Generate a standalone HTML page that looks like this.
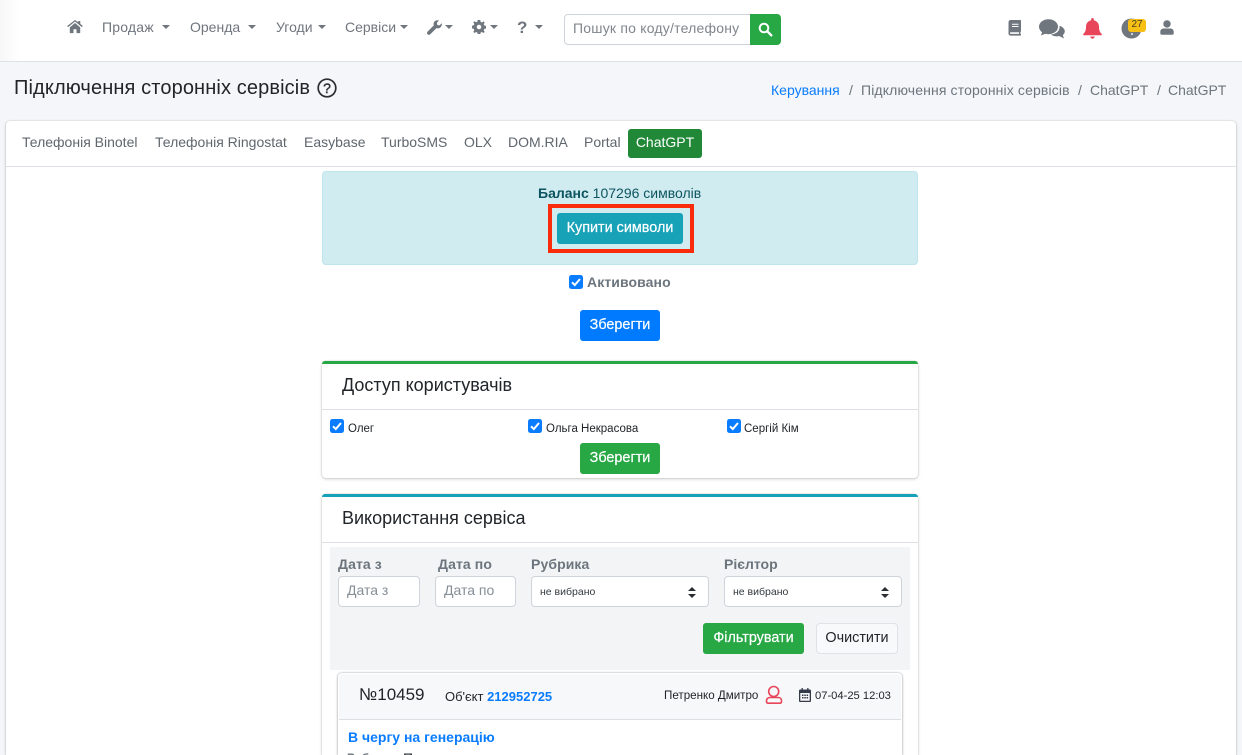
<!DOCTYPE html>
<html lang="uk"><head><meta charset="utf-8"><title>ChatGPT</title>
<style>
*{box-sizing:border-box}
html,body{margin:0;padding:0;width:1242px;height:755px;overflow:hidden;background:#f4f6f9;font-family:"Liberation Sans",Arial,sans-serif;font-size:14px;color:#212529}
#w{position:relative;width:1242px;height:755px;overflow:hidden;background:#f4f6f9}
.a{position:absolute}
.t{position:absolute;white-space:nowrap;line-height:20px}
.nav{color:#6f767d;font-size:14px}
.caret{position:absolute;width:0;height:0;border-left:4px solid transparent;border-right:4px solid transparent;border-top:4px solid #6f767d}
.btn{position:absolute;border-radius:3px;color:#fff;text-align:center;font-size:14.4px;font-weight:400;-webkit-text-stroke:.2px #fff}
.card{position:absolute;background:#fff;border-radius:4px;box-shadow:0 0 1px rgba(0,0,0,.25),0 1px 3px rgba(0,0,0,.2)}
.cb{position:absolute;width:13px;height:13px;background:#0a7cff;border-radius:2.5px}
.cb svg{position:absolute;left:0;top:0}
.lbl{color:#6c757d;font-weight:700}
.inp{position:absolute;background:#fff;border:1px solid #ced4da;border-radius:4px}
svg{display:block}
</style></head><body><div id="w">

<!-- top nav -->
<div class="a" style="left:0;top:0;width:1242px;height:62px;background:#fff;border-bottom:1px solid #dee2e6"></div>
<div class="a" style="left:0;top:0;width:20px;height:61px;background:linear-gradient(90deg,#f7f7f7,#fff)"></div>

<svg class="a" style="left:67px;top:20px" width="16" height="14" viewBox="0 0 16 14"><path fill="#6f767d" d="M8 3 2.8 7.4V12.6c0 .3.2.5.5.5H6.500V9.300h3V13.100h3.200c.3 0 .5-.2.5-.5V7.400zM15.800 6 13.300 3.900V1h-2v1.200L8 0 .2 6l.9 1.100L8 1.500l6.900 5.600z"/></svg>
<div class="t nav" style="left:102px;top:17px;letter-spacing:.2px">Продаж</div><div class="caret" style="left:162px;top:25px"></div>
<div class="t nav" style="left:190px;top:17px">Оренда</div><div class="caret" style="left:248px;top:25px"></div>
<div class="t nav" style="left:276px;top:17px">Угоди</div><div class="caret" style="left:318px;top:25px"></div>
<div class="t nav" style="left:345px;top:17px">Сервіси</div><div class="caret" style="left:400px;top:25px"></div>
<svg class="a" style="left:427px;top:20px" width="15" height="15" viewBox="0 0 15 15"><path fill="#6f767d" d="M14.700 3.200 12.500 5.400 10.300 5 9.900 2.700 12 .5C10.500-.1 8.800.2 7.700 1.300 6.600 2.400 6.300 4 6.800 5.400L.6 11.600c-.8.800-.8 1.900 0 2.700.8.800 1.900.8 2.700 0L9.500 8.100c1.400.5 3 .2 4.100-.9 1.100-1.100 1.500-2.700 1.100-4z"/></svg>
<div class="caret" style="left:445px;top:25px"></div>
<svg class="a" style="left:472px;top:20px" width="14" height="14" viewBox="0 0 14 14"><path fill="#6f767d" fill-rule="evenodd" d="M5.700 0h2.600l.4 2 1.200.5L11.600 1.400l1.100 1.100-1 1.700.5 1.200 1.800.5v2.600l-1.800.5-.5 1.200 1 1.700-1.100 1.100-1.700-1-1.200.5-.4 1.800H5.700l-.4-1.800-1.200-.5-1.700 1-1.100-1.100 1-1.700-.5-1.200L0 8.300V5.700l1.800-.5.5-1.200-1-1.700 1.100-1.100 1.700 1 1.200-.5zM7 4.700a2.300 2.300 0 1 0 0 4.600 2.300 2.300 0 0 0 0-4.600z"/></svg>
<div class="caret" style="left:490px;top:25px"></div>
<div class="t" style="left:517px;top:18px;font-size:17px;font-weight:700;color:#6f767d">?</div>
<div class="caret" style="left:535px;top:25px"></div>

<div class="inp" style="left:564px;top:14px;width:187px;height:31px;border-radius:4px 0 0 4px;"></div>
<div class="t" style="left:573px;top:18px;color:#80868c;letter-spacing:.015em">Пошук по коду/телефону</div>
<div class="a" style="left:750px;top:14px;width:31px;height:31px;background:#28a745;border-radius:0 4px 4px 0"></div>
<svg class="a" style="left:758px;top:22px" width="15" height="15" viewBox="0 0 15 15"><circle cx="6" cy="6" r="4.300" fill="none" stroke="#fff" stroke-width="2"/><path d="M9.300 9.300 13.300 13.300" stroke="#fff" stroke-width="2.400" stroke-linecap="round"/></svg>

<!-- right icons -->
<svg class="a" style="left:1008px;top:20px" width="14" height="16" viewBox="0 0 14 16"><path fill="#6f767d" d="M2.500 0H12.200c.5 0 .8.300.8.800V11c0 .4-.2.600-.5.700-.2.600-.2 1.500 0 2.100.3.100.5.300.5.600v.6c0 .3-.3.600-.6.600H2.700A2.200 2.200 0 0 1 .5 13V2.500C.5 1 1.200 0 2.500 0zM4 3.800V4.800H10.500V3.800zM4 6V7H10.500V6zM2.800 12.200c-1.100 0-1.100 1.700 0 1.700H11v-1.700z"/></svg>
<svg class="a" style="left:1039px;top:19px" width="26" height="20" viewBox="0 0 26 20"><ellipse cx="9.500" cy="7.700" rx="9.500" ry="7.500" fill="#6f767d"/><path fill="#6f767d" d="M3.500 12 2 16.500 8 14z"/><path fill="#6f767d" d="M20.500 6.800C23.800 8 25.800 10 25.800 12.300c0 1.500-.8 2.800-2 3.800L25 19.500l-4.600-2.400c-3 .6-6.500.1-8.500-1.600 4.500 0 9.300-3.100 8.600-8.700z"/></svg>
<svg class="a" style="left:1083px;top:18px" width="19" height="21" viewBox="0 0 19 21"><path fill="#e8455a" d="M9.500 0c.8 0 1.300.6 1.300 1.300v.9c3.100.6 5.200 3.300 5.200 6.300 0 4 .9 5.700 2.700 7.500.4.500.2 1.300-.6 1.300H.9c-.8 0-1-.8-.6-1.300C2.100 14.200 3 12.500 3 8.500c0-3 2.100-5.700 5.200-6.300v-.9C8.200.6 8.700 0 9.500 0zM7.300 18.500h4.400c0 1.200-1 2.200-2.200 2.200s-2.200-1-2.200-2.200z"/></svg>
<svg class="a" style="left:1121px;top:18px" width="21" height="21" viewBox="0 0 21 21"><circle cx="10.500" cy="10.500" r="10" fill="#6f767d"/><circle cx="11" cy="16" r="1.100" fill="#d8dadc"/></svg>
<div class="a" style="left:1128px;top:19px;width:18px;height:13px;background:#f8bf15;border-radius:3px;text-align:center;font-size:10px;line-height:12px;color:#4a4020">27</div>
<svg class="a" style="left:1160px;top:20px" width="14" height="15" viewBox="0 0 14 15"><circle cx="7" cy="3.900" r="3.700" fill="#6f767d"/><path fill="#6f767d" d="M3.500 8.500h7c1.800 0 3.200 1.400 3.200 3.200v1.700c0 .8-.6 1.400-1.400 1.400H1.700C.9 14.800.3 14.200.3 13.400v-1.700c0-1.800 1.400-3.200 3.200-3.200z"/></svg>

<!-- header row -->
<div class="t" style="left:14px;top:77px;font-size:20px;line-height:22px;color:#212529;letter-spacing:.12px">Підключення сторонніх сервісів</div>
<svg class="a" style="left:317px;top:78px" width="20" height="20" viewBox="0 0 20 20"><circle cx="10" cy="10" r="8.800" fill="none" stroke="#2a2e33" stroke-width="1.700"/><text x="10" y="15" text-anchor="middle" font-family="Liberation Sans" font-size="14" fill="#2a2e33" stroke="#2a2e33" stroke-width=".4">?</text></svg>
<div class="t" style="left:771px;top:80px;color:#0a7cff">Керування</div>
<div class="t" style="left:849px;top:80px;color:#6c757d">/</div>
<div class="t" style="left:861px;top:80px;color:#6c757d;letter-spacing:.13px">Підключення сторонніх сервісів</div>
<div class="t" style="left:1078px;top:80px;color:#6c757d">/</div>
<div class="t" style="left:1090px;top:80px;color:#6c757d">ChatGPT</div>
<div class="t" style="left:1157px;top:80px;color:#6c757d">/</div>
<div class="t" style="left:1168px;top:80px;color:#6c757d">ChatGPT</div>

<!-- main card -->
<div class="card" style="left:6px;top:121px;width:1230px;height:634px;border-radius:4px 4px 0 0"></div>
<div class="a" style="left:6px;top:166px;width:1230px;height:1px;background:#dee2e6"></div>
<div class="t" style="left:22px;top:132px;color:#5f666d">Телефонія Binotel</div>
<div class="t" style="left:155px;top:132px;color:#5f666d">Телефонія Ringostat</div>
<div class="t" style="left:304px;top:132px;color:#5f666d">Easybase</div>
<div class="t" style="left:381px;top:132px;color:#5f666d">TurboSMS</div>
<div class="t" style="left:464px;top:132px;color:#5f666d">OLX</div>
<div class="t" style="left:508px;top:132px;color:#5f666d">DOM.RIA</div>
<div class="t" style="left:584px;top:132px;color:#5f666d">Portal</div>
<div class="a" style="left:628px;top:129px;width:74px;height:29px;background:#218838;border-radius:3px;color:#fff;text-align:center;line-height:26px">ChatGPT</div>

<!-- alert -->
<div class="a" style="left:322px;top:171px;width:596px;height:94px;background:#d1ecf1;border:1px solid #bee5eb;border-radius:4px"></div>
<div class="t" style="left:538px;top:183px;color:#0c5460"><b>Баланс</b> 107296 символів</div>
<div class="a" style="left:548px;top:204px;width:146px;height:49px;border:4px solid #fb2c0c"></div>
<div class="btn" style="left:557px;top:213px;width:126px;height:31px;background:#17a2b8;line-height:30px">Купити символи</div>

<div class="cb" style="left:569px;top:275px;width:14px;height:14px"><svg width="14" height="14" viewBox="0 0 14 14"><path d="M3 7.300 5.800 10 11 4" fill="none" stroke="#fff" stroke-width="2"/></svg></div>
<div class="t lbl" style="left:587px;top:272px;letter-spacing:.1px">Активовано</div>
<div class="btn" style="left:580px;top:310px;width:80px;height:31px;background:#007bff;line-height:30px">Зберегти</div>

<!-- access card -->
<div class="card" style="left:322px;top:361px;width:596px;height:117px;"></div>
<div class="a" style="left:322px;top:361px;width:596px;height:3px;background:#28a745;border-radius:4px 4px 0 0"></div>
<div class="t" style="left:342px;top:375px;font-size:18px;line-height:21px">Доступ користувачів</div>
<div class="a" style="left:322px;top:409px;width:596px;height:1px;background:#dee2e6"></div>
<div class="cb" style="left:330px;top:419px;width:14px;height:14px"><svg width="14" height="14" viewBox="0 0 14 14"><path d="M3 7.300 5.800 10 11 4" fill="none" stroke="#fff" stroke-width="2"/></svg></div>
<div class="t" style="left:348px;top:419px;font-size:11.5px">Олег</div>
<div class="cb" style="left:528px;top:419px;width:14px;height:14px"><svg width="14" height="14" viewBox="0 0 14 14"><path d="M3 7.300 5.800 10 11 4" fill="none" stroke="#fff" stroke-width="2"/></svg></div>
<div class="t" style="left:546px;top:419px;font-size:11.5px">Ольга Некрасова</div>
<div class="cb" style="left:727px;top:419px;width:14px;height:14px"><svg width="14" height="14" viewBox="0 0 14 14"><path d="M3 7.300 5.800 10 11 4" fill="none" stroke="#fff" stroke-width="2"/></svg></div>
<div class="t" style="left:744px;top:419px;font-size:11.5px">Сергій Кім</div>
<div class="btn" style="left:580px;top:443px;width:80px;height:31px;background:#28a745;line-height:30px">Зберегти</div>

<!-- usage card -->
<div class="card" style="left:322px;top:494px;width:596px;height:261px;border-radius:4px 4px 0 0"></div>
<div class="a" style="left:322px;top:494px;width:596px;height:3px;background:#17a2b8;border-radius:4px 4px 0 0"></div>
<div class="t" style="left:342px;top:508px;font-size:18px;line-height:21px">Використання сервіса</div>
<div class="a" style="left:322px;top:542px;width:596px;height:1px;background:#dee2e6"></div>
<div class="a" style="left:330px;top:547px;width:580px;height:123px;background:#f2f4f6"></div>

<div class="t lbl" style="left:338px;top:554px;letter-spacing:.1px">Дата з</div>
<div class="t lbl" style="left:438px;top:554px;letter-spacing:.1px">Дата по</div>
<div class="t lbl" style="left:531px;top:554px;letter-spacing:.1px">Рубрика</div>
<div class="t lbl" style="left:724px;top:554px">Рієлтор</div>
<div class="inp" style="left:338px;top:576px;width:82px;height:31px"></div>
<div class="t" style="left:347px;top:580px;color:#868e96">Дата з</div>
<div class="inp" style="left:435px;top:576px;width:81px;height:31px"></div>
<div class="t" style="left:444px;top:580px;color:#868e96">Дата по</div>
<div class="inp" style="left:531px;top:576px;width:178px;height:31px"></div>
<div class="t" style="left:540px;top:582px;font-size:10.5px;color:#33383d">не вибрано</div>
<svg class="a" style="left:688px;top:587px" width="8" height="11" viewBox="0 0 8 11"><path fill="#2a2e33" d="M4 0 8 4H0zM4 11 0 7h8z"/></svg>
<div class="inp" style="left:724px;top:576px;width:178px;height:31px"></div>
<div class="t" style="left:733px;top:582px;font-size:10.5px;color:#33383d">не вибрано</div>
<svg class="a" style="left:881px;top:587px" width="8" height="11" viewBox="0 0 8 11"><path fill="#2a2e33" d="M4 0 8 4H0zM4 11 0 7h8z"/></svg>

<div class="btn" style="left:703px;top:623px;width:101px;height:31px;background:#28a745;line-height:30px">Фільтрувати</div>
<div class="a" style="left:816px;top:623px;width:82px;height:31px;background:#f8f9fa;border:1px solid #dfe2e6;border-radius:4px;text-align:center;line-height:28px;color:#212529;font-size:14.4px">Очистити</div>

<!-- inner card -->
<div class="card" style="left:338px;top:673px;width:564px;height:82px;border-radius:4px 4px 0 0;box-shadow:0 0 2px rgba(0,0,0,.3),0 1px 3px rgba(0,0,0,.18)"></div>
<div class="a" style="left:339px;top:674px;width:562px;height:46px;background:#f7f8f9;border-bottom:1px solid #dcdfe3;border-radius:4px 4px 0 0"></div>
<div class="t" style="left:359px;top:685px;font-size:17px;color:#212529">№10459</div>
<div class="t" style="left:445px;top:687px;font-size:13px"><span style="color:#212529">Об'єкт </span><b style="color:#0a7cff">212952725</b></div>
<div class="t" style="left:664px;top:686px;font-size:11.6px;color:#212529">Петренко Дмитро</div>
<svg class="a" style="left:765px;top:684px" width="18" height="21" viewBox="0 0 18 21"><circle cx="8.700" cy="7.500" r="5" fill="none" stroke="#e8455a" stroke-width="1.600"/><path d="M5 13.500H13c2 0 3.500 1.300 3.500 3v1c0 1-.7 1.700-1.700 1.700H3.200c-1 0-1.700-.7-1.700-1.700v-1C1.500 14.800 3 13.500 5 13.500z" fill="none" stroke="#e8455a" stroke-width="1.600"/></svg>
<svg class="a" style="left:799px;top:688px" width="12" height="14" viewBox="0 0 12 14"><path fill="#343a4a" fill-rule="evenodd" d="M2.500 0h1.300v1.500h4.400V0h1.300v1.500h1.300c.7 0 1.200.5 1.200 1.200v10c0 .7-.5 1.300-1.200 1.300H1.200C.5 14 0 13.400 0 12.700v-10c0-.7.500-1.200 1.200-1.200h1.300zM1.300 5v7.600c0 .1.100.2.200.2h9c.1 0 .2-.1.200-.2V5zM3 6.500h1.500V8H3zM5.300 6.500h1.500V8H5.300zM7.600 6.500h1.500V8H7.600zM3 9h1.500v1.500H3zM5.300 9h1.500v1.500H5.300zM7.600 9h1.500v1.500H7.600z"/></svg>
<div class="t" style="left:815px;top:686px;font-size:11.2px;color:#212529">07-04-25 12:03</div>
<div class="t" style="left:348px;top:727px;font-weight:700;color:#0a7cff">В чергу на генерацію</div>
<div class="t" style="left:347px;top:748px;height:7px;overflow:hidden;font-size:12px;font-weight:700;color:#6c757d">Рубрика:</div>
<div class="t" style="left:403px;top:748px;height:7px;overflow:hidden;color:#212529">П</div>

</div></body></html>
